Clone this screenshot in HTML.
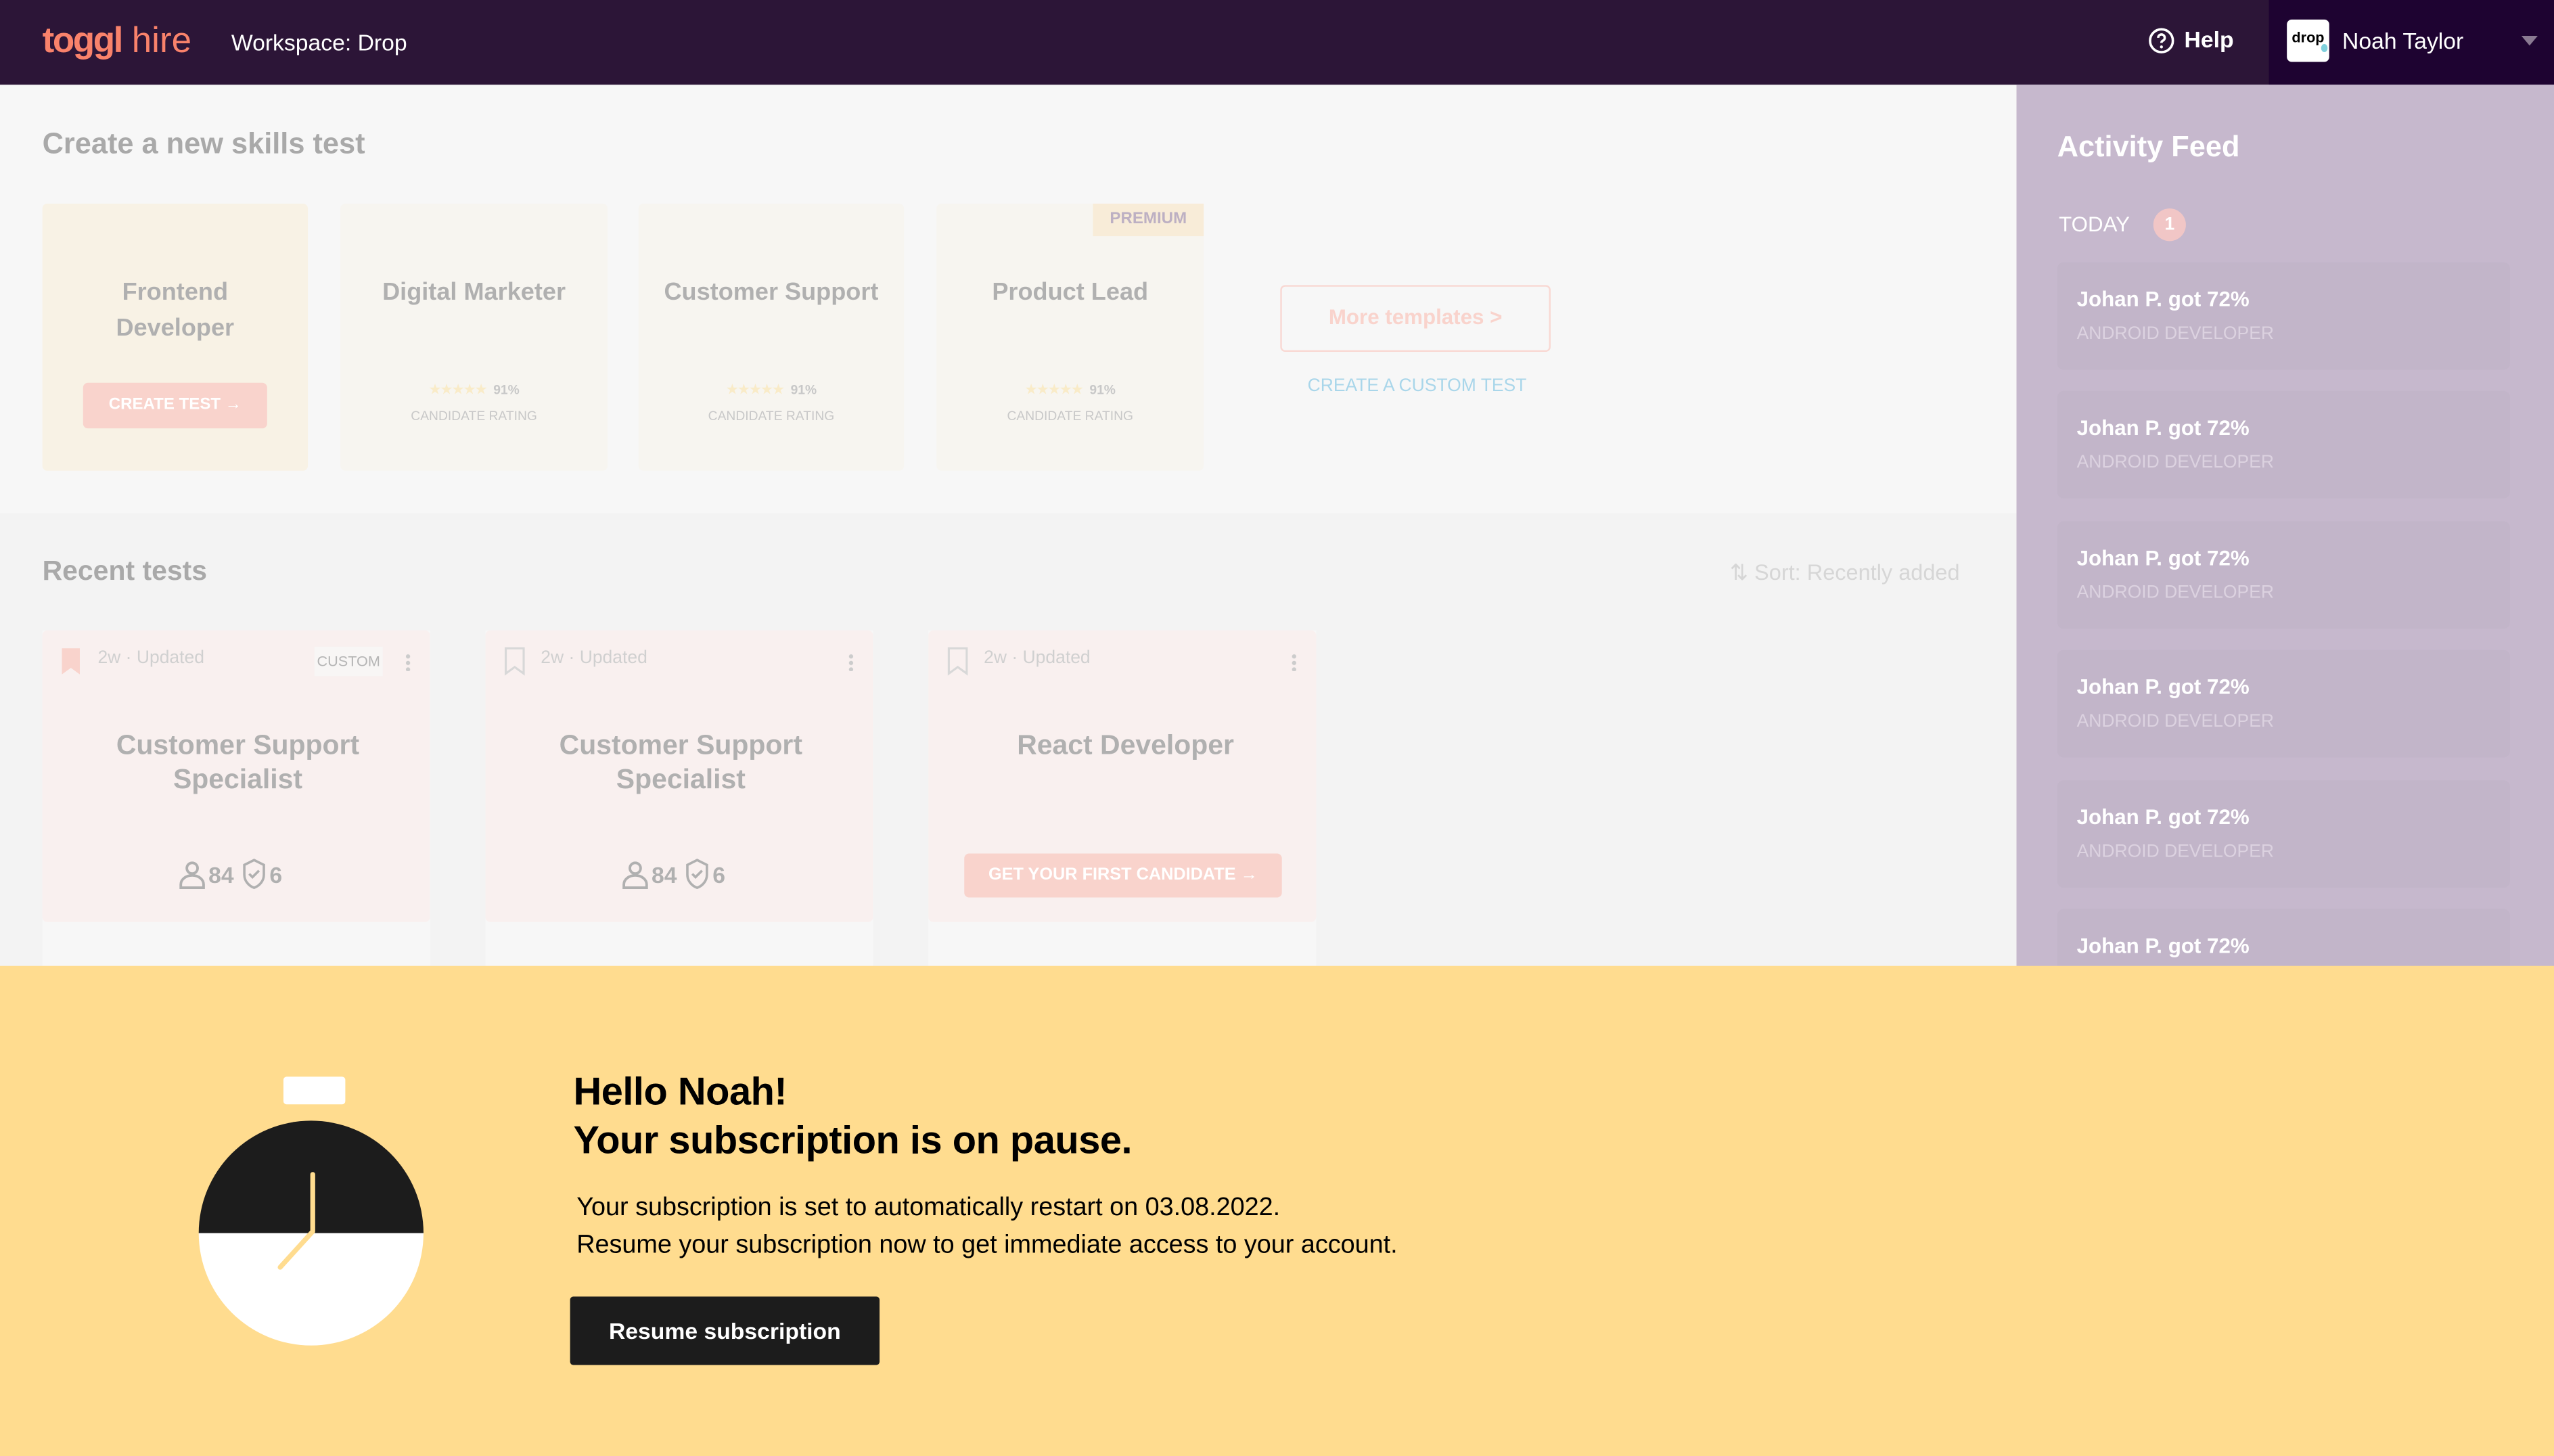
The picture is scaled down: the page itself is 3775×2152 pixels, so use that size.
<!DOCTYPE html>
<html><head><meta charset="utf-8"><style>
*{margin:0;padding:0;box-sizing:border-box}
html,body{width:3775px;height:2152px;overflow:hidden;background:#f7f7f7}
#w{width:1568px;height:894px;transform:scale(2.40753);transform-origin:0 0;position:relative;font-family:"Liberation Sans",sans-serif;overflow:hidden}
.a{position:absolute}
.hdr{left:0;top:0;width:1568px;height:52px;background:#2c1537}
.card{background:#f7f5f0;border-radius:3px}
.ct{color:#b0b0b0;font-weight:bold;font-size:15px;text-align:center;line-height:22px}
.star{color:#f9ebc8;font-size:9px;letter-spacing:-1px}
.rt{font-size:8px;color:#c8c8c8;text-align:center}
.rc{background:#f9f0ef;border-radius:3px}
.fi{left:1263px;width:278px;height:66px;background:#c2b5c9;border-radius:4px}
.fi b{position:absolute;left:12px;top:15px;color:#fff;font-size:13px}
.fi span{position:absolute;left:12px;top:38px;color:#dcd2e0;font-size:11px}
.st{font-size:14px;font-weight:bold;color:#b0b0b0;display:flex;align-items:center;gap:1px}
</style></head><body><div id="w">
<div class="a hdr"></div>
<div class="a" style="left:1393px;top:0;width:175px;height:52px;background:#1e0331"></div>
<div class="a" style="left:26px;top:12px;font-size:22px;color:#f9826b;font-weight:bold;letter-spacing:-1px">toggl<span style="font-weight:normal;letter-spacing:0"> hire</span></div>
<div class="a" style="left:142px;top:18px;font-size:14px;color:#fff">Workspace: Drop</div>
<svg class="a" style="left:1319px;top:17px" width="16" height="16" viewBox="0 0 16 16"><circle cx="8" cy="8" r="7" fill="none" stroke="#fff" stroke-width="1.5"/><path d="M6 6.2a2 2 0 1 1 2.8 1.8c-.6.3-.8.7-.8 1.3" fill="none" stroke="#fff" stroke-width="1.5"/><circle cx="8" cy="11.8" r=".9" fill="#fff"/></svg>
<div class="a" style="left:1341px;top:16px;font-size:14px;color:#fff;font-weight:bold">Help</div>
<div class="a" style="left:1404px;top:12px;width:26px;height:26px;background:#fff;border-radius:3px;font-size:9px;font-weight:bold;text-align:center;line-height:22px">drop</div>
<div class="a" style="left:1425px;top:27px;width:4px;height:5px;background:#7fd0dc;border-radius:50%"></div>
<div class="a" style="left:1438px;top:17px;font-size:14px;color:#fff">Noah Taylor</div>
<div class="a" style="left:1548px;top:22px;width:0;height:0;border-left:5px solid transparent;border-right:5px solid transparent;border-top:6px solid #8a7a92"></div>

<div class="a" style="left:0;top:315px;width:1238px;height:280px;background:#f3f3f3"></div>
<div class="a" style="left:26px;top:78px;font-size:18px;font-weight:bold;color:#a9a9a9">Create a new skills test</div>
<div class="a card" style="left:26px;top:125px;width:163px;height:164px;background:#f8f2e5"><div class="ct" style="margin-top:44px">Frontend<br>Developer</div><div style="margin:22px auto 0;width:113px;height:28px;background:#f9d3cc;border-radius:3px;color:#fff;font-size:10px;font-weight:bold;text-align:center;line-height:28px">CREATE TEST →</div></div>
<div class="a card" style="left:209px;top:125px;width:164px;height:164px"><div class="ct" style="margin-top:44px">Digital Marketer</div><div style="text-align:center;margin-top:38px"><span class="star">★★★★★</span> <span style="font-size:8px;color:#c8c8c8;font-weight:bold">91%</span></div><div class="rt" style="margin-top:4px">CANDIDATE RATING</div></div>
<div class="a card" style="left:392px;top:125px;width:163px;height:164px"><div class="ct" style="margin-top:44px">Customer Support</div><div style="text-align:center;margin-top:38px"><span class="star">★★★★★</span> <span style="font-size:8px;color:#c8c8c8;font-weight:bold">91%</span></div><div class="rt" style="margin-top:4px">CANDIDATE RATING</div></div>
<div class="a card" style="left:575px;top:125px;width:164px;height:164px"><div class="ct" style="margin-top:44px">Product Lead</div><div style="text-align:center;margin-top:38px"><span class="star">★★★★★</span> <span style="font-size:8px;color:#c8c8c8;font-weight:bold">91%</span></div><div class="rt" style="margin-top:4px">CANDIDATE RATING</div></div>
<div class="a" style="left:671px;top:125px;width:68px;height:20px;background:#f8ecd8;color:#bdb0c3;font-size:10px;font-weight:bold;text-align:center;line-height:20px">PREMIUM</div>
<div class="a" style="left:786px;top:175px;width:166px;height:41px;border:1.5px solid #f9d8d3;border-radius:3px;color:#f9d3cc;font-size:13px;font-weight:bold;text-align:center;line-height:38px">More templates &gt;</div>
<div class="a" style="left:786px;top:231px;width:168px;text-align:center;color:#a9d6ea;font-size:11px">CREATE A CUSTOM TEST</div>

<div class="a" style="left:26px;top:341px;font-size:17px;font-weight:bold;color:#a9a9a9">Recent tests</div>
<div class="a" style="left:1062px;top:344px;font-size:13.5px;color:#d6d6d6">⇅ Sort: Recently added</div>

<div class="a" style="left:26px;top:387px;width:238px;height:210px;background:#f7f7f7"></div>
<div class="a rc" style="left:26px;top:387px;width:238px;height:179px"></div>
<div class="a" style="left:298px;top:387px;width:238px;height:210px;background:#f7f7f7"></div>
<div class="a rc" style="left:298px;top:387px;width:238px;height:179px"></div>
<div class="a" style="left:570px;top:387px;width:238px;height:210px;background:#f7f7f7"></div>
<div class="a rc" style="left:570px;top:387px;width:238px;height:179px"></div>
<svg class="a" style="left:37px;top:397px" width="14" height="18"><path d="M1 1h11v16l-5.5-4L1 17z" fill="#f9d3cc"/></svg>
<svg class="a" style="left:309px;top:397px" width="14" height="18"><path d="M1.5 1h11v15.5l-5.5-4-5.5 4z" fill="none" stroke="#d8d8d8" stroke-width="1.3"/></svg>
<svg class="a" style="left:581px;top:397px" width="14" height="18"><path d="M1.5 1h11v15.5l-5.5-4-5.5 4z" fill="none" stroke="#d8d8d8" stroke-width="1.3"/></svg>
<div class="a" style="left:60px;top:398px;font-size:11px;color:#d0d0d0">2w · Updated</div>
<div class="a" style="left:332px;top:398px;font-size:11px;color:#d0d0d0">2w · Updated</div>
<div class="a" style="left:604px;top:398px;font-size:11px;color:#d0d0d0">2w · Updated</div>
<div class="a" style="left:193px;top:397px;width:42px;height:18px;background:#f8f6f5;font-size:9px;color:#b5b5b5;text-align:center;line-height:18px">CUSTOM</div>
<div class="a" style="left:249px;top:401px;width:3px;height:11px;background:radial-gradient(circle,#ccc 1.2px,transparent 1.4px) 0 0/3px 4px"></div>
<div class="a" style="left:521px;top:401px;width:3px;height:11px;background:radial-gradient(circle,#ccc 1.2px,transparent 1.4px) 0 0/3px 4px"></div>
<div class="a" style="left:793px;top:401px;width:3px;height:11px;background:radial-gradient(circle,#ccc 1.2px,transparent 1.4px) 0 0/3px 4px"></div>
<div class="a ct" style="left:26px;top:447px;width:240px;font-size:17px;line-height:21px">Customer Support<br>Specialist</div>
<div class="a ct" style="left:298px;top:447px;width:240px;font-size:17px;line-height:21px">Customer Support<br>Specialist</div>
<div class="a ct" style="left:570px;top:447px;width:242px;font-size:17px">React Developer</div>
<div class="a st" style="left:109px;top:527px"><svg width="18" height="18" viewBox="0 0 18 18"><circle cx="9" cy="5" r="3.3" fill="none" stroke="#b0b0b0" stroke-width="1.6"/><path d="M2 17v-2a5 4 0 0 1 14 0v2z" fill="none" stroke="#b0b0b0" stroke-width="1.6"/></svg>84&nbsp;<svg width="16" height="19" viewBox="0 0 16 19"><path d="M8 1l6 3v6c0 4-3 7-6 8-3-1-6-4-6-8V4z" fill="none" stroke="#b0b0b0" stroke-width="1.5"/><path d="M5 9.5l2 2 4-4" fill="none" stroke="#b0b0b0" stroke-width="1.5"/></svg>6</div>
<div class="a st" style="left:381px;top:527px"><svg width="18" height="18" viewBox="0 0 18 18"><circle cx="9" cy="5" r="3.3" fill="none" stroke="#b0b0b0" stroke-width="1.6"/><path d="M2 17v-2a5 4 0 0 1 14 0v2z" fill="none" stroke="#b0b0b0" stroke-width="1.6"/></svg>84&nbsp;<svg width="16" height="19" viewBox="0 0 16 19"><path d="M8 1l6 3v6c0 4-3 7-6 8-3-1-6-4-6-8V4z" fill="none" stroke="#b0b0b0" stroke-width="1.5"/><path d="M5 9.5l2 2 4-4" fill="none" stroke="#b0b0b0" stroke-width="1.5"/></svg>6</div>
<div class="a" style="left:592px;top:524px;width:195px;height:27px;background:#f9d3cc;border-radius:3px;color:#fff;font-size:10.5px;font-weight:bold;text-align:center;line-height:27px">GET YOUR FIRST CANDIDATE →</div>

<div class="a" style="left:1238px;top:52px;width:330px;height:545px;background:#c6b8cd"></div>
<div class="a" style="left:1263px;top:80px;font-size:18px;font-weight:bold;color:#fff">Activity Feed</div>
<div class="a" style="left:1264px;top:130px;font-size:13px;color:#fff">TODAY</div>
<div class="a" style="left:1322px;top:128px;width:20px;height:20px;border-radius:50%;background:#f1c6c6;color:#fff;font-size:11px;font-weight:bold;text-align:center;line-height:20px">1</div>
<div class="a fi" style="top:161px"><b>Johan P. got 72%</b><span>ANDROID DEVELOPER</span></div>
<div class="a fi" style="top:240px"><b>Johan P. got 72%</b><span>ANDROID DEVELOPER</span></div>
<div class="a fi" style="top:320px"><b>Johan P. got 72%</b><span>ANDROID DEVELOPER</span></div>
<div class="a fi" style="top:399px"><b>Johan P. got 72%</b><span>ANDROID DEVELOPER</span></div>
<div class="a fi" style="top:479px"><b>Johan P. got 72%</b><span>ANDROID DEVELOPER</span></div>
<div class="a fi" style="top:558px"><b>Johan P. got 72%</b><span>ANDROID DEVELOPER</span></div>

<div class="a" style="left:0;top:593px;width:1568px;height:301px;background:#ffdc8f"></div>
<svg class="a" style="left:110px;top:655px" width="160" height="175" viewBox="110 655 160 175">
<rect x="174" y="661" width="38" height="17" rx="2" fill="#fff"/>
<path d="M122 757a69 69 0 0 1 138 0z" fill="#1c1c1c"/>
<path d="M122 757a69 69 0 0 0 138 0z" fill="#fff"/>
<path d="M192 721v35l-20 22" fill="none" stroke="#ffdc8f" stroke-width="3" stroke-linecap="round" stroke-linejoin="round"/>
</svg>
<div class="a" style="left:352px;top:656px;font-size:24px;font-weight:bold;color:#000;line-height:30px;letter-spacing:-.2px">Hello Noah!<br>Your subscription is on pause.</div>
<div class="a" style="left:354px;top:730px;font-size:15.7px;color:#000;line-height:23px">Your subscription is set to automatically restart on 03.08.2022.<br>Resume your subscription now to get immediate access to your account.</div>
<div class="a" style="left:350px;top:796px;width:190px;height:42px;background:#1c1c1c;border-radius:2px;color:#fff;font-size:14px;font-weight:bold;text-align:center;line-height:42px">Resume subscription</div>
</div></body></html>
